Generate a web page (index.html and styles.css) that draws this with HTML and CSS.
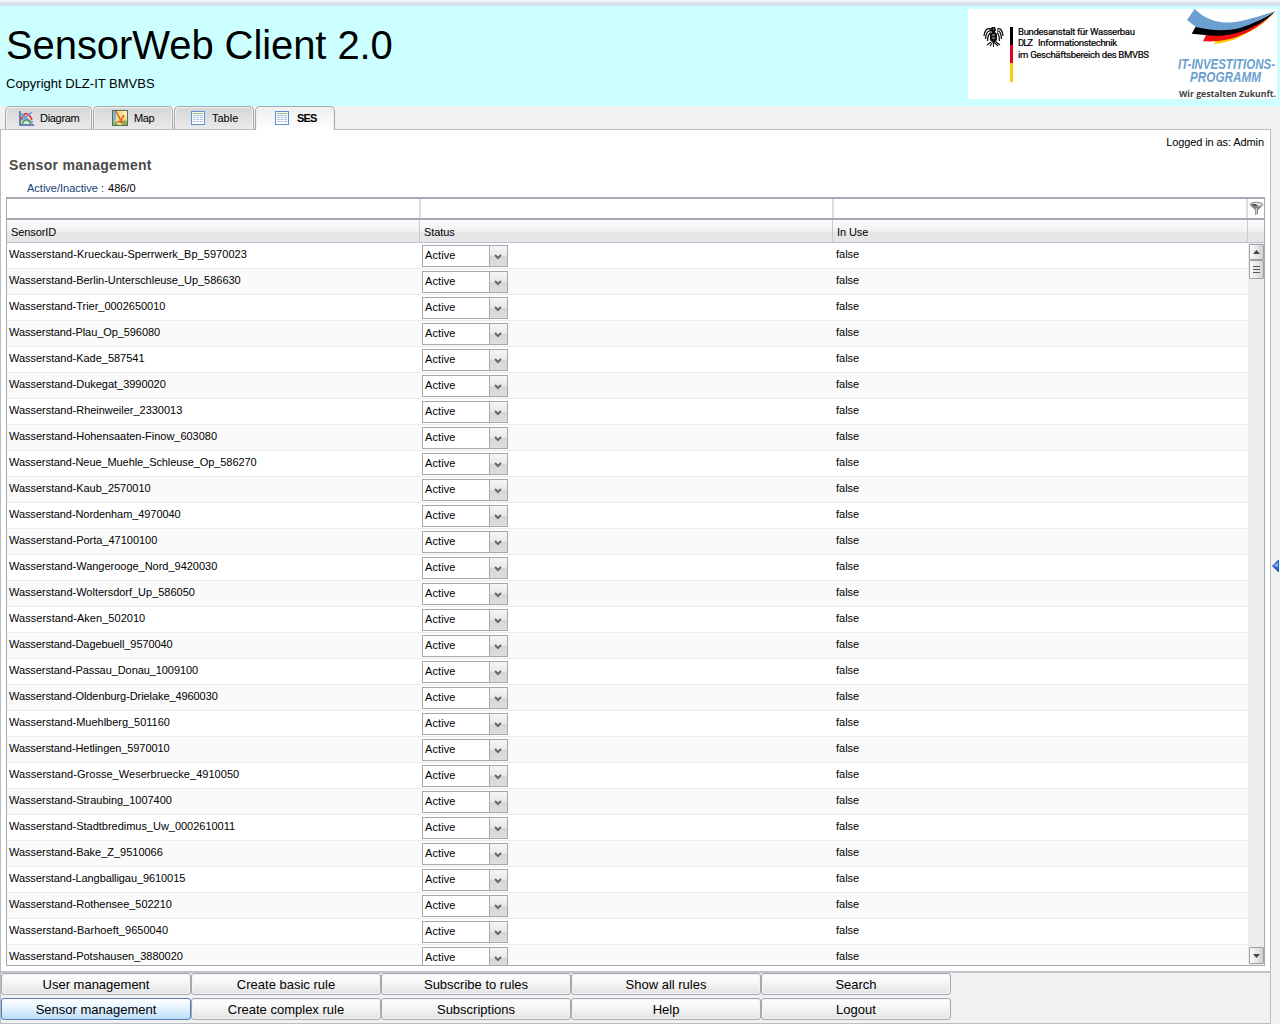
FILE: index.html
```html
<!DOCTYPE html>
<html lang="en">
<head>
<meta charset="utf-8">
<title>SensorWeb Client 2.0</title>
<link rel="stylesheet" href="styles.css">
</head>
<body>
<header class="banner">
  <div class="brand">
    <h1>SensorWeb Client 2.0</h1>
    <p>Copyright DLZ-IT BMVBS</p>
  </div>
  <svg class="logos" width="309" height="90" viewBox="0 0 309 90">
    <rect width="309" height="90" fill="#fff"/>
    <g fill="none" stroke="#111" stroke-width="1.300">
      <path d="M23 20Q17 18 16 27M23 22Q18 21 17.500 30M23 24Q20 24 19.500 32M29 20Q34 18 35 27M29 22Q33 21 33.500 30M29 24Q31 24 31.500 32"/>
      <path d="M23 33L19 36M28 33L32 36M24 34L22 37M27 34L30 37M25.500 33V38" stroke-width="1.100"/>
    </g>
    <path d="M24 18l3 0 1 3-1 2 2 2v6l-3 4-4-4v-6l2-2-3-2z" fill="#111"/>
    <path d="M24 26h3M24 29h3M25 20h1" stroke="#fff" stroke-width=".7"/>
    <rect x="42" y="18" width="3" height="18" fill="#000"/>
    <rect x="42" y="36" width="3" height="18" fill="#e2001a"/>
    <rect x="42" y="54" width="3" height="19" fill="#f8cf00"/>
    <g class="agency">
      <text x="50" y="26" textLength="117">Bundesanstalt für Wasserbau</text>
      <text x="50" y="37" textLength="15">DLZ</text>
      <text x="70" y="37" textLength="79">Informationstechnik</text>
      <text x="50" y="48.500" textLength="131">im Geschäftsbereich des BMVBS</text>
    </g>
    <path d="M306 3.500C297 14 288 20 279 24 271 29 262 33 246 35L248 31C272 27 290 18 306 3.500z" fill="#ffcc00"/>
    <path d="M306 3C297 13 286 21 272.700 26.300 262 31 250 33 235 32.300L238 26C268 26 290 16 306 3z" fill="#f01010"/>
    <path d="M307 2.500C300 10 292 15 282.700 18.700 268 26 252 28 237 26L223.700 24.700 228 17C262 23 288 15 307 2.500z" fill="#000"/>
    <path d="M226.700 0C238 11 250 14 262 13.500 278 12 294 6 308 2 299 7 288 14 272.700 18.700 256 23 241 21 228 18L219 11z" fill="#6b9fcf"/>
    <g class="programme">
      <text x="210" y="59.500" textLength="97" lengthAdjust="spacingAndGlyphs">IT-INVESTITIONS-</text>
      <text x="222" y="72.500" textLength="71" lengthAdjust="spacingAndGlyphs">PROGRAMM</text>
    </g>
    <text class="slogan" x="211" y="87.500" textLength="97" lengthAdjust="spacingAndGlyphs">Wir gestalten Zukunft.</text>
  </svg>
</header>

<nav class="tabs">
  <div class="tab t-diagram">
    <svg width="15" height="15" viewBox="0 0 15 15" fill="none"><path d="M1 0v14h14" stroke="#3d65a5" stroke-width="1.500"/><path d="M2 9C5 1 9 0 13 9" stroke="#e23a35" stroke-width="1.700"/><path d="M2 3c3 0 6 7 12 8M13 1C10 3 6 8 2 9" stroke="#6194d8" stroke-width="1.400"/><path d="M3 13c2-5 6-6 9 0" stroke="#51a04b" stroke-width="1.600"/></svg>
    <span>Diagram</span>
  </div>
  <div class="tab t-map">
    <svg width="16" height="16" viewBox="0 0 16 16"><rect x=".5" y=".5" width="15" height="15" fill="#f4e08a" stroke="#596b55"/><path d="M1 1h3v9l-3 2z" fill="#7fb0c8"/><path d="M10 1h5v6l-4-2z" fill="#f8efb0"/><path d="M11 10l4 1v4h-5zM1 12l4-1 1 4H1z" fill="#85b45c"/><path d="M4 1l4 8 3 4M12 5L9 10M6 11l4 2" stroke="#e45a34" stroke-width="1.500" fill="none"/></svg>
    <span>Map</span>
  </div>
  <div class="tab t-table">
    <svg width="14" height="14" viewBox="0 0 14 14"><rect x=".5" y=".5" width="13" height="13" fill="#fff" stroke="#5d91d2"/><path d="M2 2.500h10" stroke="#86bd76"/><path d="M2 4.500h10M2 6.500h10M2 8.500h10M2 10.500h10" stroke="#a8c2e2"/><path d="M5 5v7M8.500 5v7" stroke="#fff" stroke-width=".8"/></svg>
    <span>Table</span>
  </div>
  <div class="tab t-ses active">
    <svg width="14" height="14" viewBox="0 0 14 14"><rect x=".5" y=".5" width="13" height="13" fill="#fff" stroke="#5d91d2"/><path d="M2 2.500h10" stroke="#86bd76"/><path d="M2 4.500h10M2 6.500h10M2 8.500h10M2 10.500h10" stroke="#a8c2e2"/><path d="M5 5v7M8.500 5v7" stroke="#fff" stroke-width=".8"/></svg>
    <span>SES</span>
  </div>
</nav>

<div class="workspace">
<main class="panel">
  <div class="login">Logged in as: Admin</div>
  <h2>Sensor management</h2>
  <p class="counts"><span>Active/Inactive :</span> 486/0</p>

  <section class="grid">
    <div class="filters">
      <div></div><div></div><div></div>
      <div class="funnel"><svg width="15" height="15" viewBox="0 0 15 15"><path d="M1 4l5 5v5l3-1V9l5-5z" fill="#858585"/><path d="M7.300 7v6" stroke="#ddd"/><ellipse cx="7.500" cy="3.500" rx="6.500" ry="2.300" fill="#ddd" stroke="#777" stroke-width=".8"/><path d="M2 3.500q4-2 7 1.500-5 1-7-1.500" fill="#555"/></svg></div>
    </div>
    <div class="heads"><div>SensorID</div><div>Status</div><div>In Use</div><div></div></div>
    <div class="body">
      <div class="rows">
        <div class="row wide"><span>Wasserstand-Krueckau-Sperrwerk_Bp_5970023</span><b class="pick">Active</b><span>false</span></div>
        <div class="row"><span>Wasserstand-Berlin-Unterschleuse_Up_586630</span><b class="pick">Active</b><span>false</span></div>
        <div class="row"><span>Wasserstand-Trier_0002650010</span><b class="pick">Active</b><span>false</span></div>
        <div class="row tight"><span>Wasserstand-Plau_Op_596080</span><b class="pick">Active</b><span>false</span></div>
        <div class="row"><span>Wasserstand-Kade_587541</span><b class="pick">Active</b><span>false</span></div>
        <div class="row"><span>Wasserstand-Dukegat_3990020</span><b class="pick">Active</b><span>false</span></div>
        <div class="row"><span>Wasserstand-Rheinweiler_2330013</span><b class="pick">Active</b><span>false</span></div>
        <div class="row"><span>Wasserstand-Hohensaaten-Finow_603080</span><b class="pick">Active</b><span>false</span></div>
        <div class="row tight"><span>Wasserstand-Neue_Muehle_Schleuse_Op_586270</span><b class="pick">Active</b><span>false</span></div>
        <div class="row"><span>Wasserstand-Kaub_2570010</span><b class="pick">Active</b><span>false</span></div>
        <div class="row tight"><span>Wasserstand-Nordenham_4970040</span><b class="pick">Active</b><span>false</span></div>
        <div class="row"><span>Wasserstand-Porta_47100100</span><b class="pick">Active</b><span>false</span></div>
        <div class="row"><span>Wasserstand-Wangerooge_Nord_9420030</span><b class="pick">Active</b><span>false</span></div>
        <div class="row"><span>Wasserstand-Woltersdorf_Up_586050</span><b class="pick">Active</b><span>false</span></div>
        <div class="row wide"><span>Wasserstand-Aken_502010</span><b class="pick">Active</b><span>false</span></div>
        <div class="row tight"><span>Wasserstand-Dagebuell_9570040</span><b class="pick">Active</b><span>false</span></div>
        <div class="row tight"><span>Wasserstand-Passau_Donau_1009100</span><b class="pick">Active</b><span>false</span></div>
        <div class="row tight"><span>Wasserstand-Oldenburg-Drielake_4960030</span><b class="pick">Active</b><span>false</span></div>
        <div class="row"><span>Wasserstand-Muehlberg_501160</span><b class="pick">Active</b><span>false</span></div>
        <div class="row tight"><span>Wasserstand-Hetlingen_5970010</span><b class="pick">Active</b><span>false</span></div>
        <div class="row wide"><span>Wasserstand-Grosse_Weserbruecke_4910050</span><b class="pick">Active</b><span>false</span></div>
        <div class="row"><span>Wasserstand-Straubing_1007400</span><b class="pick">Active</b><span>false</span></div>
        <div class="row"><span>Wasserstand-Stadtbredimus_Uw_0002610011</span><b class="pick">Active</b><span>false</span></div>
        <div class="row"><span>Wasserstand-Bake_Z_9510066</span><b class="pick">Active</b><span>false</span></div>
        <div class="row tight"><span>Wasserstand-Langballigau_9610015</span><b class="pick">Active</b><span>false</span></div>
        <div class="row"><span>Wasserstand-Rothensee_502210</span><b class="pick">Active</b><span>false</span></div>
        <div class="row wide"><span>Wasserstand-Barhoeft_9650040</span><b class="pick">Active</b><span>false</span></div>
        <div class="row"><span>Wasserstand-Potshausen_3880020</span><b class="pick">Active</b><span>false</span></div>
      </div>
      <div class="scroll">
        <div class="knob up"><svg width="7" height="4"><path d="M0 4L3.500 0 7 4z" fill="#444"/></svg></div>
        <div class="knob thumb"><svg width="7" height="8"><path d="M0 .5h7M0 3.500h7M0 6.500h7" stroke="#555"/></svg></div>
        <div class="knob down"><svg width="7" height="4"><path d="M0 0h7L3.500 4z" fill="#444"/></svg></div>
      </div>
    </div>
  </section>

  <footer class="actions">
    <button>User management</button><button>Create basic rule</button><button>Subscribe to rules</button><button>Show all rules</button><button>Search</button>
    <button class="on">Sensor management</button><button>Create complex rule</button><button>Subscriptions</button><button>Help</button><button>Logout</button>
  </footer>
</main>
<aside class="expander"><svg width="8" height="12" viewBox="0 0 8 12"><path d="M0 6L6 0h1v12H6z" fill="#2462c4"/><path d="M1.500 6L6 2v5z" fill="#7fb0f0"/></svg></aside>
</div>
</body>
</html>
```
FILE: styles.css
```css
* { box-sizing: border-box; }
body {
  margin: 0;
  height: 1024px;
  overflow: hidden;
  display: flex;
  flex-direction: column;
  background: #f1f1f1;
  color: #000;
  font: 11px/14px "Liberation Sans", Arial, sans-serif;
}
h1, h2, p { margin: 0; font-weight: normal; }

.banner {
  height: 106px;
  flex: none;
  display: flex;
  justify-content: space-between;
  padding-top: 6px;
  background: linear-gradient(#f3f5fb 2px, #d9e1f1 2px, #d9e1f1 6px, #cff 6px);
}
.brand { padding: 16px 0 0 6px; }
.brand h1 { font-size: 40px; line-height: 46px; letter-spacing: -.08px; }
.brand p { margin-top: 8px; font-size: 13px; line-height: 16px; }
.logos { margin: 3px 3px 0 0; }
.agency { font: 400 9.500px Roboto, sans-serif; stroke: #000; stroke-width: .2px; }
.programme { font: italic bold 13.800px "Liberation Sans", sans-serif; fill: #6b9fcf; }
.slogan { font: bold 9.500px "Open Sans", sans-serif; fill: #444; }

.tabs {
  height: 24px;
  flex: none;
  display: flex;
  gap: 1px;
  padding-left: 5px;
  position: relative;
  z-index: 1;
}
.tab {
  height: 23px;
  display: flex;
  align-items: center;
  border: 1px solid #a9a9ab;
  border-bottom: 0;
  border-radius: 5px 5px 0 0;
  background: linear-gradient(#d5d5d5, #eaeaea);
  box-shadow: inset 1px 1px #f0f0f0, inset -1px 0 #f0f0f0;
  letter-spacing: -.3px;
}
.t-diagram { width: 87px; padding-left: 13px; gap: 6px; }
.t-map { width: 80px; padding-left: 18px; gap: 6px; letter-spacing: -.4px; }
.t-table { width: 80px; padding-left: 16px; gap: 7px; letter-spacing: 0; }
.t-ses { width: 80px; padding: 0 0 1px 19px; gap: 8px; letter-spacing: -.8px; }
.tab.active { height: 24px; background: linear-gradient(#efefef, #fff); font-weight: bold; }

.workspace { flex: 1; display: flex; margin-top: -1px; min-height: 0; }
.panel {
  width: 1271px;
  display: flex;
  flex-direction: column;
  border: 1px solid #bbbdc3;
  background: #fff;
}
.login { padding: 5px 6px 0 0; text-align: right; letter-spacing: -.1px; }
h2 { padding: 8px 0 0 8px; font-size: 14px; line-height: 16px; font-weight: bold; color: #4a4a4a; letter-spacing: .3px; }
.counts { padding: 8px 0 0 26px; margin-bottom: 2px; }
.counts span { color: #123d78; margin-right: 1px; }

.grid {
  flex: none;
  width: 1259px;
  height: 769px;
  margin-left: 5px;
  border: 1px solid #a4a9b2;
  border-top-width: 2px;
  display: flex;
  flex-direction: column;
}
.filters, .heads { display: grid; flex: none; }
.filters { grid-template-columns: 414px 413px 414px 16px; height: 21px; border-bottom: 2px solid #a4a9b2; }
.filters div { border-right: 2px solid #d8dce6; }
.filters div:last-child { border: 0; }
.funnel { display: flex; align-items: center; justify-content: center; }
.heads { grid-template-columns: 413px 413px 415px 16px; height: 23px; border-bottom: 1px solid #b9c2d3; background: linear-gradient(#fbfbfb, #f3f3f3 45%, #e6e6e6 60%, #e6e6e6); }
.heads div { padding: 5px 0 0 4px; border-right: 1px solid #c6cad3; letter-spacing: -.1px; }
.heads div:last-child { border: 0; }
.body { flex: 1; min-height: 0; display: flex; overflow: hidden; }
.rows { width: 1241px; }
.row {
  height: 26px;
  display: grid;
  grid-template-columns: 415px 411px 1fr;
  border-bottom: 1px solid #ebebeb;
  letter-spacing: -.02px;
}
.row.wide { letter-spacing: .04px; }
.row.tight { letter-spacing: -.08px; }
.row:nth-child(even) { background: #fafafa; }
.row span { padding: 4px 0 0 2px; }
.row span:last-child { padding-left: 3px; letter-spacing: 0; }
.pick {
  width: 86px;
  height: 22px;
  margin-top: 2px;
  padding: 0 0 0 2px;
  display: flex;
  justify-content: space-between;
  border: 1px solid #a6a8ac;
  background: #fff;
  font-weight: normal;
  line-height: 18px;
  letter-spacing: .1px;
}
.pick::after {
  content: "";
  width: 17px;
  border-left: 1px solid #a6a8ac;
  background:
    conic-gradient(from -45deg at 50% 100%, transparent 0, transparent 0) no-repeat,
    url("data:image/svg+xml,%3Csvg xmlns='http://www.w3.org/2000/svg' width='8' height='6'%3E%3Cpath d='M1 1l3 3 3-3' fill='none' stroke='%23686868' stroke-width='2'/%3E%3C/svg%3E") 4px 8px / 8px 6px no-repeat,
    linear-gradient(#f5f5f5, #e8e8e8 50%, #d6d6d6 51%, #dedede);
}
.scroll { width: 16px; background: #ededed; display: flex; flex-direction: column; align-items: center; padding: 1px 0 0; }
.knob {
  width: 15px;
  display: flex;
  align-items: center;
  justify-content: center;
  border: 1px solid #a0a0a0;
  border-radius: 1px;
  background: linear-gradient(90deg, #fafafa, #e4e4e4 60%, #d0d0d0);
}
.up { height: 16px; }
.thumb { height: 19px; }
.down { height: 17px; margin-top: auto; margin-bottom: 1px; }

.actions {
  flex: 1;
  margin-top: 5px;
  border-top: 2px solid #c0c3c9;
  background: #f1f1f1;
  display: grid;
  grid-template-columns: repeat(5, 190px);
  grid-auto-rows: 22px;
  row-gap: 3px;
}
.actions button {
  padding: 2px 0 0;
  border: 1px solid #a4a9b2;
  border-radius: 3px;
  background: linear-gradient(#fff, #f4f4f4 50%, #e2e2e2);
  box-shadow: inset 0 0 0 1px #f3f3f3;
  font: 13px/18px "Liberation Sans", Arial, sans-serif;
  color: #000;
}
.actions .on { border-color: #527cb5; background: linear-gradient(#fff, #e5f4ff 45%, #bcdcfa); box-shadow: none; }
.expander { display: flex; align-items: center; padding: 0 0 22px 1px; }
```
